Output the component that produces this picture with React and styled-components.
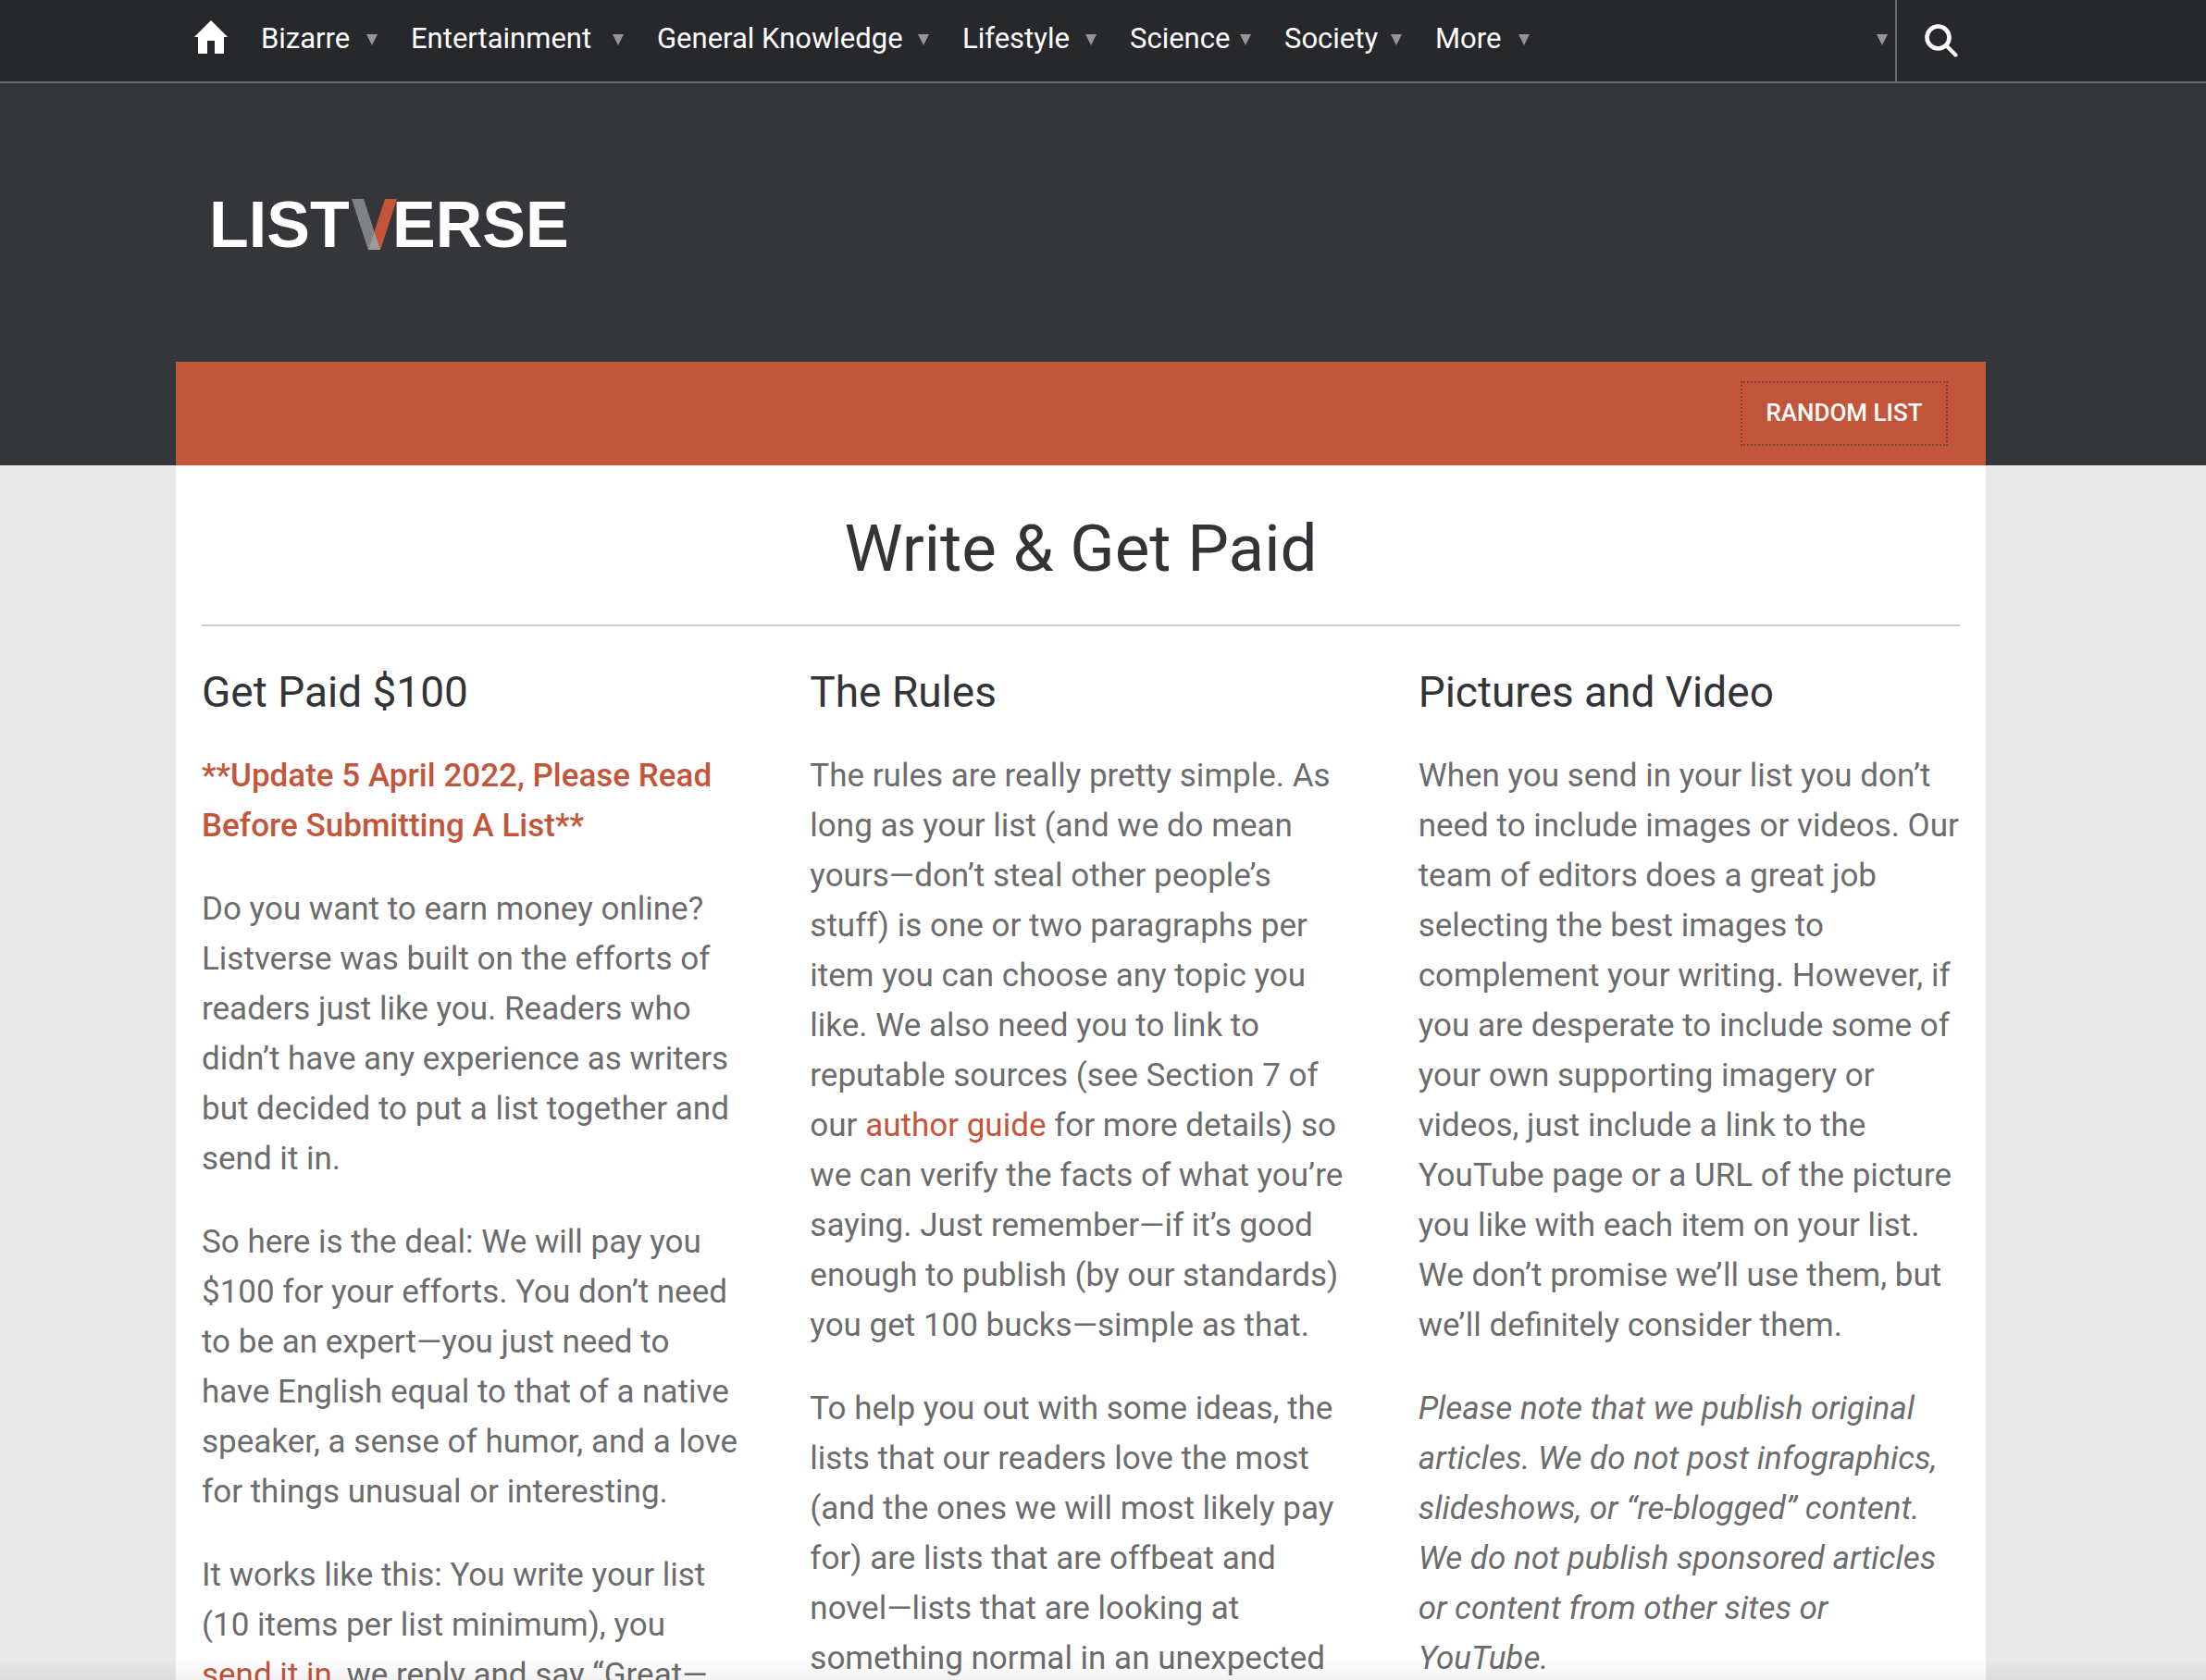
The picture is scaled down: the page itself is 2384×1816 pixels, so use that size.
// lib
import styled, { createGlobalStyle } from "styled-components";

const COLORS = {
  nav: "#27282b",
  header: "#353639",
  accent: "#c3553b",
  line: "#6b6d6b",
  rule: "#cccccc",
  page: "#e9e9e9",
  heading: "#333438",
  text: "#6c6c6c",
  arrow: "#949494",
};

const NAV_ITEMS = [
  { label: "Bizarre", width: 162 },
  { label: "Entertainment", width: 266 },
  { label: "General Knowledge", width: 330 },
  { label: "Lifestyle", width: 181 },
  { label: "Science", width: 167 },
  { label: "Society", width: 163 },
  { label: "More", width: 138 },
];

function HomeIcon() {
  return (
    <svg width="36" height="36" viewBox="0 0 36 36" aria-hidden="true">
      <path d="M18 0 36 18H32V36H22V22H14V36H4V18H0Z" fill="#fff" />
    </svg>
  );
}

function SearchIcon() {
  return (
    <svg width="36" height="36" viewBox="0 0 36 36" aria-hidden="true">
      <g fill="none" stroke="#fff" strokeLinecap="round">
        <circle cx="14.5" cy="14.5" r="12" strokeWidth="4.6" />
        <path d="M23.5 23.5 33.5 33.5" strokeWidth="4" />
      </g>
    </svg>
  );
}

function Logo() {
  return (
    <svg
      width="400"
      height="84"
      viewBox="0 0 400 84"
      role="img"
      aria-label="Listverse"
    >
      <LogoText x="0" y="65">
        LIST
      </LogoText>
      <g transform="translate(154 13)">
        <rect width="13" height="55" fill="#818284" transform="skewX(18)" />
        <rect
          x="36"
          width="13"
          height="55"
          fill={COLORS.accent}
          transform="skewX(-18)"
        />
        <path d="M24.5 36 31 55H18Z" fill="#9b9b9b" />
      </g>
      <LogoText x="198" y="65">
        ERSE
      </LogoText>
    </svg>
  );
}

export default function App() {
  return (
    <Page>
      <GlobalStyle />
      <NavBar>
        <NavInner>
          <HomeLink href="#home" aria-label="Home">
            <HomeIcon />
          </HomeLink>
          {NAV_ITEMS.map((item) => (
            <NavItem key={item.label} href="#menu" $width={item.width}>
              {item.label}
              <Arrow />
            </NavItem>
          ))}
          <NavEnd>
            <MoreButton type="button" aria-label="More categories">
              <Arrow />
            </MoreButton>
            <SearchButton type="button" aria-label="Search">
              <SearchIcon />
            </SearchButton>
          </NavEnd>
        </NavInner>
      </NavBar>
      <Header>
        <Container>
          <LogoLink href="#home">
            <Logo />
          </LogoLink>
          <ActionBar>
            <RandomButton type="button">RANDOM LIST</RandomButton>
          </ActionBar>
        </Container>
      </Header>
      <Main>
        <Content>
          <Title>Write &amp; Get Paid</Title>
          <Columns>
            <section>
              <Heading>Get Paid $100</Heading>
              <Notice>
                **Update 5 April 2022, Please Read Before Submitting A List**
              </Notice>
              <Text>
                Do you want to earn money online? Listverse was built on the
                efforts of readers just like you. Readers who didn’t have any
                experience as writers but decided to put a list together and
                send it in.
              </Text>
              <Text>
                So here is the deal: We will pay you $100 for your efforts. You
                don’t need to be an expert—you just need to have English equal
                to that of a native speaker, a sense of humor, and a love for
                things unusual or interesting.
              </Text>
              <Text>
                It works like this: You write your list (10 items per list
                minimum), you <a href="#send">send it in</a>, we reply and say
                “Great—
              </Text>
            </section>
            <section>
              <Heading>The Rules</Heading>
              <Text>
                The rules are really pretty simple. As long as your list (and we
                do mean yours—don’t steal other people’s stuff) is one or two
                paragraphs per item you can choose any topic you like. We also
                need you to link to reputable sources (see Section 7 of our{" "}
                <a href="#guide">author guide</a> for more details) so we can
                verify the facts of what you’re saying. Just remember—if it’s
                good enough to publish (by our standards) you get 100
                bucks—simple as that.
              </Text>
              <Text>
                To help you out with some ideas, the lists that our readers love
                the most (and the ones we will most likely pay for) are lists
                that are offbeat and novel—lists that are looking at something
                normal in an unexpected
              </Text>
            </section>
            <section>
              <Heading>Pictures and Video</Heading>
              <Text>
                When you send in your list you don’t need to include images or
                videos. Our team of editors does a great job selecting the best
                images to complement your writing. However, if you are desperate
                to include some of your own supporting imagery or videos, just
                include a link to the YouTube page or a URL of the picture you
                like with each item on your list. We don’t promise we’ll use
                them, but we’ll definitely consider them.
              </Text>
              <Text>
                <em>
                  Please note that we publish original articles. We do not post
                  infographics, slideshows, or “re-blogged” content. We do not
                  publish sponsored articles or content from other sites or
                  YouTube.
                </em>
              </Text>
            </section>
          </Columns>
        </Content>
      </Main>
    </Page>
  );
}

const GlobalStyle = createGlobalStyle`
  * {
    box-sizing: border-box;
  }

  body {
    margin: 0;
    background: ${COLORS.page};
    color: ${COLORS.text};
    font-family: Roboto, "Liberation Sans", sans-serif;
  }

  h1, h2, p {
    margin: 0;
    font-weight: 400;
  }

  a {
    color: ${COLORS.accent};
    text-decoration: none;
  }

  button {
    font-family: inherit;
    background: none;
    border: 0;
    padding: 0;
    cursor: pointer;
  }
`;

const Page = styled.div`
  height: 100vh;
  overflow-y: auto;
  scrollbar-width: none;

  /* soft shade along the bottom edge of the window */
  &::after {
    content: "";
    position: fixed;
    left: 0;
    right: 0;
    bottom: 0;
    height: 24px;
    background: linear-gradient(rgba(0, 0, 0, 0), rgba(0, 0, 0, 0.05));
    pointer-events: none;
  }
`;

const Container = styled.div`
  max-width: 1956px;
  margin: 0 auto;
`;

const NavBar = styled.nav`
  height: 90px;
  padding-right: 48px;
  background: ${COLORS.nav};
  border-bottom: 2px solid ${COLORS.line};
`;

const NavInner = styled(Container)`
  height: 100%;
  display: flex;
`;

const HomeLink = styled.a`
  width: 92px;
  padding: 22px 0 0 20px;
`;

const NavItem = styled.a`
  width: ${(props) => props.$width}px;
  height: 82px;
  padding-right: 36px;
  display: flex;
  align-items: center;
  justify-content: space-between;
  color: #fff;
  font-size: 31px;
  white-space: nowrap;
`;

const Arrow = styled.span`
  border: 6px solid transparent;
  border-top: 12px solid ${COLORS.arrow};
  border-bottom: 0;
  margin-top: 4px;
`;

const NavEnd = styled.div`
  margin-left: auto;
  display: flex;
`;

const MoreButton = styled.button`
  width: 20px;
  height: 82px;
  display: flex;
  align-items: center;
`;

const SearchButton = styled.button`
  width: 98px;
  height: 100%;
  padding-left: 30px;
  border-left: 2px solid ${COLORS.line};
  display: flex;
  align-items: center;
`;

const Header = styled.header`
  background: ${COLORS.header};
  padding-right: 48px;
`;

const LogoLink = styled.a`
  height: 301px;
  padding: 112px 0 0 36px;
  display: block;
`;

const LogoText = styled.text`
  font-family: "Liberation Sans", Arial, sans-serif;
  font-weight: 700;
  font-size: 70px;
  fill: #fff;
`;

const ActionBar = styled.div`
  height: 112px;
  padding: 21px 41px 0 0;
  background: ${COLORS.accent};
  display: flex;
  align-items: flex-start;
  justify-content: flex-end;
`;

const RandomButton = styled.button`
  width: 224px;
  height: 70px;
  padding-bottom: 2px;
  border: 2px dotted #7f4439;
  color: #fff;
  font-size: 26px;
  font-weight: 500;
`;

const Main = styled.main`
  padding-right: 48px;
`;

const Content = styled(Container)`
  padding: 0 28px;
  background: #fff;
`;

const Title = styled.h1`
  height: 174px;
  border-bottom: 2px solid ${COLORS.rule};
  color: ${COLORS.heading};
  font-size: 71px;
  line-height: 180px;
  text-align: center;
`;

const Columns = styled.div`
  padding-top: 35px;
  display: grid;
  grid-template-columns: repeat(3, 1fr);
  gap: 72px;
`;

const Heading = styled.h2`
  color: ${COLORS.heading};
  font-size: 46px;
  line-height: 72px;
  margin-bottom: 28px;
`;

const Text = styled.p`
  font-size: 35px;
  line-height: 54px;
  margin-bottom: 36px;
`;

const Notice = styled(Text)`
  color: ${COLORS.accent};
  font-weight: 500;
`;
